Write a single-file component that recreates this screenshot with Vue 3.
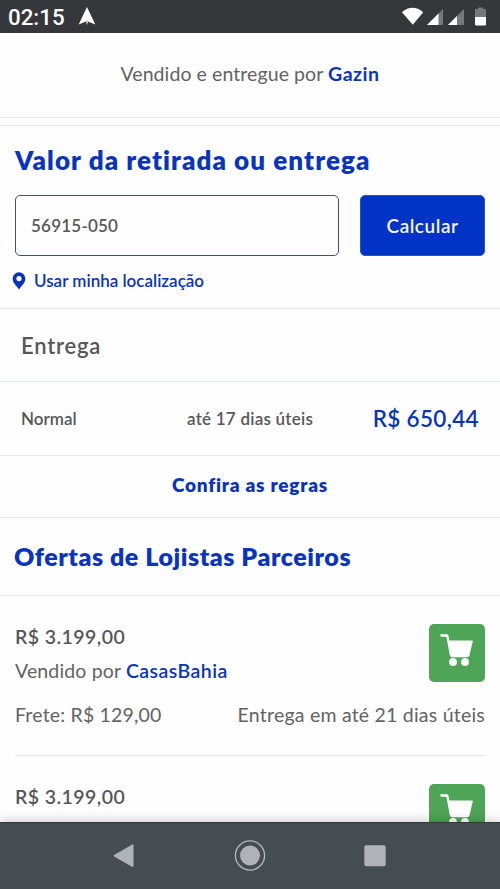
<script setup>
const offers = [
  { price: 'R$ 3.199,00', seller: 'CasasBahia', freight: 'Frete: R$ 129,00', eta: 'Entrega em até 21 dias úteis' },
  { price: 'R$ 3.199,00' },
]
</script>

<template>
  <div class="screen">
    <header class="status">
      <span class="clock">02:15</span>
      <svg class="nav-arrow" width="18" height="20" viewBox="0 0 18 20"><path d="M9 0 17.300 17.500 10 14.600 9.600 18.500 9 12 8.400 18.500 8 14.600 .7 17.500Z" fill="#fff" /></svg>
      <svg class="signals" width="88" height="22" viewBox="0 0 88 22">
        <path d="M2 5.200Q12.500-3.500 23.200 5.200L12.800 17.800Z" fill="#fff" />
        <path d="M43 2V18H27Z" fill="#77787b" /><path d="M38.500 6.500V18H27Z" fill="#fff" />
        <path d="M64 2V18H48Z" fill="#77787b" /><path d="M57 9V18H48Z" fill="#fff" />
        <path d="M78 .5h5v1.500h3V10H75V2h3Z" fill="#77787b" />
        <path d="M75 10h11v7.500q0 1-1 1H76q-1 0-1-1Z" fill="#fff" />
      </svg>
    </header>

    <main class="page">
      <p class="sold">Vendido e entregue por <b>Gazin</b></p>
      <div class="divider"></div>

      <section class="shipping">
        <h2 class="title">Valor da retirada ou entrega</h2>
        <div class="form">
          <div class="field">56915-050</div>
          <button class="calc">Calcular</button>
        </div>
        <a class="locate">
          <svg width="14" height="18" viewBox="0 0 14 18"><path fill-rule="evenodd" d="M7 .3a6.400 6.400 0 0 0-6.400 6.400C.6 11 5 14.300 7 17.500 9 14.300 13.400 11 13.400 6.700A6.400 6.400 0 0 0 7 .3Zm0 3.700a2.600 2.600 0 1 1 0 5.200 2.600 2.600 0 0 1 0-5.200Z" fill="#0a34bd" /></svg>
          <span>Usar minha localização</span>
        </a>
      </section>

      <h3 class="delivery">Entrega</h3>
      <div class="option">
        <span class="kind">Normal</span>
        <span class="days">até 17 dias úteis</span>
        <span class="cost">R$ 650,44</span>
      </div>
      <a class="rules">Confira as regras</a>
      <h2 class="partners">Ofertas de Lojistas Parceiros</h2>

      <article v-for="(o, i) in offers" :key="i" class="offer">
        <div class="top">
          <div>
            <div class="price">{{ o.price }}</div>
            <div v-if="o.seller" class="seller">Vendido por <b>{{ o.seller }}</b></div>
          </div>
          <button class="cart">
            <svg width="56" height="57" viewBox="0 0 56 57">
              <path d="M12.300 11.500H18.300L22 31" fill="none" stroke="#fff" stroke-width="2.300" stroke-linecap="round" stroke-linejoin="round" />
              <path d="M19.500 17.200H43.200L39.800 31.500Q39.400 32.600 38.200 32.600H23.300Q22 32.600 21.700 31.400Z" fill="#fff" stroke="#fff" stroke-width="1.200" stroke-linejoin="round" />
              <circle cx="24" cy="38" r="3.900" fill="#fff" /><circle cx="36" cy="38" r="3.900" fill="#fff" />
            </svg>
          </button>
        </div>
        <div v-if="o.freight" class="bottom">
          <span class="freight">{{ o.freight }}</span>
          <span class="eta">{{ o.eta }}</span>
        </div>
      </article>
    </main>

    <nav class="navbar">
      <svg width="500" height="67" viewBox="0 0 500 67">
        <path d="M114.500 33.700 132.700 23.200V44.200Z" fill="#afb3b7" stroke="#afb3b7" stroke-width="1.600" stroke-linejoin="round" />
        <circle cx="250" cy="33.500" r="14.600" fill="none" stroke="#b4b8bb" stroke-width="1.300" />
        <circle cx="250" cy="33.500" r="10" fill="#afb3b7" />
        <rect x="364.300" y="23.300" width="21.400" height="21" rx="2" fill="#afb3b7" />
      </svg>
    </nav>
  </div>
</template>

<style>
body { margin: 0; overflow: hidden; }
</style>

<style scoped>
.screen { width: 500px; height: 889px; display: flex; flex-direction: column; overflow: hidden; background: #fefefe; color: #565758; font-family: Lato, sans-serif; }
h2, h3, p { margin: 0; }
.status { flex: none; box-sizing: border-box; height: 33px; background: #36373b; display: flex; align-items: flex-start; padding: 7px 12px 0 8px; }
.clock { font: 500 22.300px/21px Roboto, sans-serif; color: #fff; }
.nav-arrow { margin-left: 13px; }
.signals { margin-left: auto; }
.page { flex: 1; min-height: 0; overflow: hidden; }
.sold { box-sizing: border-box; height: 85px; padding-top: 28px; text-align: center; font-size: 19.500px; line-height: 25px; letter-spacing: 0.080px; color: #626364; border-bottom: 1px solid #e6eaee; }
.sold b { letter-spacing: 0.500px; color: #0a34bd; }
.divider { box-sizing: border-box; height: 8px; border-bottom: 1px solid #e3e8ee; }
.shipping { box-sizing: border-box; height: 183px; padding: 17px 15px 0; border-bottom: 1px solid #e4e7eb; }
.title { font-size: 26px; font-weight: 800; line-height: 34px; letter-spacing: 1.080px; color: #0a34bd; white-space: nowrap; }
.form { display: grid; grid-template-columns: 324px 125px; justify-content: space-between; height: 61px; margin-top: 17.500px; }
.field { box-sizing: border-box; display: flex; align-items: center; padding-left: 15px; border: 1.500px solid #2a50b4; border-radius: 5px; font-size: 17px; font-weight: 600; letter-spacing: 0.220px; }
.calc { border: 1px solid #1f5bb8; border-radius: 5px; background: #0033c6; color: #f3f5fd; font: 600 19px Lato, sans-serif; letter-spacing: 0.540px; padding: 0; }
.locate { display: flex; align-items: center; gap: 8px; height: 24px; margin: 13px 0 0 -3px; font-size: 17px; font-weight: 600; color: #0a34bd; }
.delivery { box-sizing: border-box; height: 73px; padding-left: 21px; border-bottom: 1px solid #e2e7ea; font-size: 22px; font-weight: 600; line-height: 73px; letter-spacing: 0.780px; }
.option { box-sizing: border-box; height: 74px; padding: 0 21px; border-bottom: 1px solid #dfe8ee; display: grid; grid-template-columns: 166px 1fr auto; line-height: 74px; font-size: 17px; font-weight: 600; }
.days { letter-spacing: 0.230px; }
.cost { font-size: 22.500px; letter-spacing: 0.330px; color: #0a34bd; }
.rules { box-sizing: border-box; display: block; height: 62px; border-bottom: 1px solid #e4e7eb; text-align: center; font-size: 19px; font-weight: 800; line-height: 58px; letter-spacing: 0.780px; color: #0a34bd; }
.partners { box-sizing: border-box; height: 78px; padding-left: 14px; border-bottom: 1px solid #dfe8f0; font-size: 25px; font-weight: 800; line-height: 76px; letter-spacing: 0.550px; color: #0a34bd; white-space: nowrap; }
.offer { box-sizing: border-box; height: 160px; margin: 0 15px; padding-top: 28px; border-bottom: 1px solid #e2e9ec; }
.top { display: flex; justify-content: space-between; align-items: flex-start; height: 76px; font-size: 19.500px; }
.price { font-weight: 600; line-height: 25px; letter-spacing: 0.420px; }
.seller { line-height: 25px; margin-top: 9px; letter-spacing: 0.150px; color: #626364; }
.seller b { font-weight: 600; letter-spacing: 0.450px; color: #0a34bd; }
.cart { width: 56px; height: 57.500px; padding: 0; border: 0; border-radius: 5px; background: #4fa557; display: flex; }
.bottom { display: flex; justify-content: space-between; font-size: 19.500px; line-height: 30px; letter-spacing: 0.180px; color: #626364; }
.eta { letter-spacing: 0.220px; }
.navbar { position: relative; flex: none; box-sizing: border-box; height: 67px; background: #464d52; border-top: 1px solid #34393d; box-shadow: 0 -2px 10px rgba(0, 0, 0, 0.180); }
.navbar svg { display: block; margin-top: -1px; }
</style>
